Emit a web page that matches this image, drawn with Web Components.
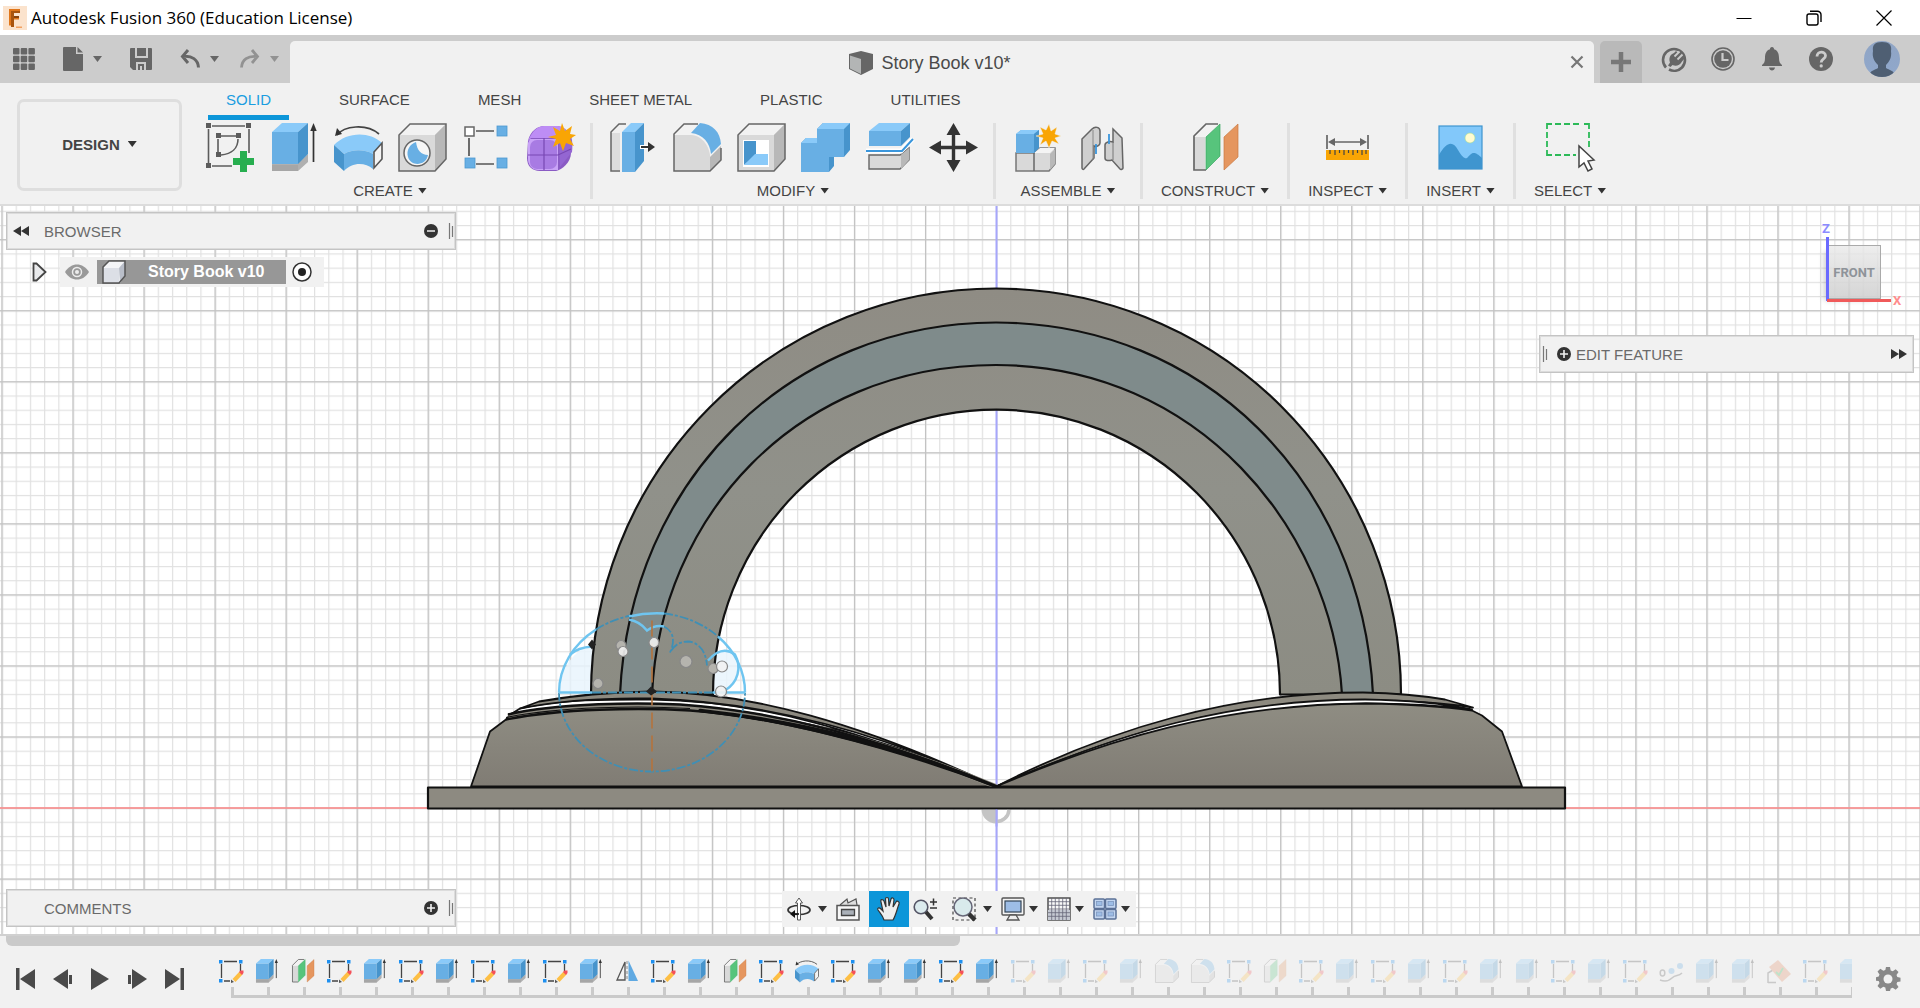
<!DOCTYPE html>
<html lang="en">
<head>
<meta charset="utf-8">
<title>Autodesk Fusion 360 (Education License)</title>
<style>
html,body{margin:0;height:100%}
body{font-family:"Liberation Sans",Arial,sans-serif;font-size:15px;color:#444;background:#f1f1f1;overflow:hidden}
</style>
</head>
<body>
<fx-app></fx-app>
<script>
const ICONS = {
  // application bar
  logo: ['0 0 24 24', '<rect width="24" height="24" fill="#fbe3cd"/><path d="M6 3h11v3.500h-6v3.500h5v3.500h-5v6h-5z" fill="#e0761a"/><path d="M8 5h9v2h-6v14h-3z" fill="#a8540f"/><path d="M11 10h5v2h-5z" fill="#8a430c"/><path d="M13 20.500h6v1.500h-6z" fill="#f0a060"/>'],
  min: ['0 0 16 16', '<path d="M0.500 8.500h15" stroke="#000" fill="none"/>'],
  restore: ['0 0 16 16', '<rect x="1" y="4" width="11" height="11" rx="2" fill="none" stroke="#000" stroke-width="1.400"/><path d="M4 1.200h7.500a3.500 3.500 0 0 1 3.500 3.500v7.300" fill="none" stroke="#000" stroke-width="1.400"/>'],
  close: ['0 0 16 16', '<path d="M0.500 0.500l15 15M15.500 0.500l-15 15" stroke="#000" stroke-width="1.200"/>'],
  apps: ['0 0 22 22', '<g fill="#666"><rect width="6.500" height="6.500" rx="1"/><rect x="7.700" width="6.500" height="6.500" rx="1"/><rect x="15.400" width="6.500" height="6.500" rx="1"/><rect y="7.700" width="6.500" height="6.500" rx="1"/><rect x="7.700" y="7.700" width="6.500" height="6.500" rx="1"/><rect x="15.400" y="7.700" width="6.500" height="6.500" rx="1"/><rect y="15.400" width="6.500" height="6.500" rx="1"/><rect x="7.700" y="15.400" width="6.500" height="6.500" rx="1"/><rect x="15.400" y="15.400" width="6.500" height="6.500" rx="1"/></g>'],
  file: ['0 0 20 24', '<path d="M1 0h12v7h7v16a1 1 0 0 1-1 1H1a1 1 0 0 1-1-1V1a1 1 0 0 1 1-1z" fill="#666"/><path d="M14.500 0l5.500 5.500h-5.500z" fill="#666"/>'],
  save: ['0 0 22 22', '<path d="M1 0h20a1 1 0 0 1 1 1v20a1 1 0 0 1-1 1H3l-3-3V1a1 1 0 0 1 1-1z" fill="#666"/><path d="M5 0h2v8h9V0h2v10H5zM6 22v-8h10v8h-2v-6H8v6z" fill="#ccc"/><path d="M10 18h2v4h-2z" fill="#ccc"/>'],
  undo: ['0 0 20 20', '<path d="M8 1L2.500 7.500L8 14M3 7.500c9-1 15 3 15.500 11" fill="none" stroke="#666" stroke-width="3"/>'],
  redo: ['0 0 20 20', '<path d="M12 1l5.500 6.500L12 14M17 7.500C8 6.500 2 10.500 1.500 18.500" fill="none" stroke="#929292" stroke-width="2.800"/>'],
  doccube: ['0 0 24 24', '<path d="M12 0l12 3v15l-12 6L0 18V3z" fill="#666"/><path d="M1 4.500L12 8v15L1 17.500z" fill="#b3b5b5"/>'],
  x: ['0 0 14 14', '<path d="M1.500 1.500l11 11M12.500 1.500l-11 11" stroke="#777" stroke-width="2.200"/>'],
  plus: ['0 0 20 20', '<path d="M10 0v20M0 10h20" stroke="#777" stroke-width="4.500"/>'],
  ext: ['0 0 24 24', '<path d="M4 20.500A11 11 0 1 1 20 20.500A11 11 0 0 1 7 22.500" fill="none" stroke="#666" stroke-width="2.600"/><path d="M6 18.500l2-3c-1.500-4 0-8 4-9.500l2-2 2 2 3-1.500 1.500 4 2 3-2.500 3c-2.500 4.500-6.500 5-9.500 3.500l-2 2z" fill="#666"/><path d="M12.500 9.500l5-5M15.500 12.500l5-5" stroke="#ccc" stroke-width="1.800"/>'],
  clock: ['0 0 24 24', '<circle cx="12" cy="12" r="11" fill="none" stroke="#666" stroke-width="1.600"/><circle cx="12" cy="12" r="8.800" fill="#666"/><path d="M11.500 6v7h6" fill="none" stroke="#ccc" stroke-width="2.200"/>'],
  bell: ['0 0 24 24', '<path d="M12 0c1.500 0 2 1 2 2.200c4 1.300 5 4.800 5 8.800c0 4 1 5.500 3 7v1H2v-1c2-1.500 3-3 3-7c0-4 1-7.500 5-8.800C10 1 10.500 0 12 0zM9 20.500h6c-.5 4-5.500 4-6 0z" fill="#666"/>'],
  help: ['0 0 24 24', '<circle cx="12" cy="12" r="12" fill="#666"/><path d="M8 9.500c0-6 8.500-5.500 8.500-.8c0 3.300-4.300 3-4.300 6.800" fill="none" stroke="#ccc" stroke-width="2.800"/><rect x="10.600" y="17.300" width="3.200" height="3.200" rx="1.500" fill="#ccc"/>'],
  avatar: ['0 0 36 36', '<defs><linearGradient id="a" x2="0" y2="1"><stop stop-color="#8fa4c4"/><stop offset="1" stop-color="#90a8cc"/></linearGradient><clipPath id="c"><circle cx="18" cy="18" r="18"/></clipPath></defs><circle cx="18" cy="18" r="18" fill="url(#a)"/><g clip-path="url(#c)"><path d="M18 1c7 0 10 3 9 9c1 7-2 11-5 14v3c3 2 8 2 10 9H4c2-7 7-7 10-9v-3c-4-4-6-8-5-14c-1-6 2-9 9-9z" fill="#4f5f73"/></g>'],
  // ribbon tools
  sketch: ['0 0 49 49', '<g stroke="#5c5c5c" stroke-width="1.600" fill="none"><path d="M6 3h33M2.500 6v34M6 43h20M43 6v24"/><path d="M15 13h15M12 16v13M32 16c0 9-6 15-17 16"/></g><g fill="#5c5c5c"><path d="M0 0h5v5H0zM40 0h5v5h-5zM0 40h5v5H0zM10 10h5v5h-5zM30 10h5v5h-5zM10 29h5v5h-5z"/></g><path d="M34 28h7v7h7v7h-7v7h-7v-7h-7v-7h7z" fill="#27ae4f"/>'],
  extrude: ['0 0 49 49', '<path d="M2 40h26l10-9v8l-10 9H2z" fill="#b0b0b0"/><path d="M2 42h26v6H2z" fill="#a6a6a6"/><path d="M2 9h26v32H2z" fill="#68afe4"/><path d="M2 9L12 0h26l-10 9z" fill="#8acaf9"/><path d="M28 9l10-9v31l-10 10z" fill="#4794cc"/><path d="M43.500 5v34" stroke="#333" stroke-width="1.700"/><path d="M43.500 0l3.200 8h-6.400z" fill="#333"/>'],
  revolve: ['0 0 49 49', '<path d="M3 12C10 3 32 0 45 11" fill="none" stroke="#444" stroke-width="1.700"/><path d="M1 13l2-8 5 6z" fill="#333"/><path d="M0 22C13 9 35 8 48 20l-9 11c-8-5-21-5-29 0z" fill="#8acaf9"/><path d="M0 22l10 9v17L0 39z" fill="#4794cc"/><path d="M10 31c8-5 21-5 29 0v15c-8-7-21-7-29 2z" fill="#68afe4"/><path d="M40 29l8-9v16l-8 9z" fill="#f4f4f4" stroke="#555" stroke-width="1.600"/>'],
  hole: ['0 0 49 49', '<path d="M1 12L12 1h36v35L37 48H1z" fill="#d9d9d9"/><path d="M1 12L12 1h36L37 12z" fill="#f2f2f2"/><path d="M37 12L48 1v35L37 48z" fill="#b8b8b8"/><path d="M1 12L12 1h36v35L37 48H1z" fill="none" stroke="#666" stroke-width="1.500"/><ellipse cx="19" cy="30" rx="13" ry="13" fill="#f6f6f6" stroke="#666" stroke-width="1.500"/><path d="M18 19c1 8 5 13 12 13c-2 11-17 12-20 2c-2-7 2-13 8-15z" fill="#68afe4"/>'],
  pattern: ['0 0 49 49', '<path d="M14 8h18M14 41h18M7 15v18" stroke="#555" stroke-width="1.700"/><rect x="3" y="4" width="9" height="9" fill="#fff" stroke="#666" stroke-width="1.500"/><g fill="#68afe4" stroke="#4d98d0" stroke-width=".8"><rect x="35" y="3" width="10" height="10"/><rect x="3" y="35" width="10" height="10"/><rect x="35" y="35" width="10" height="10"/></g>'],
  form: ['0 0 49 49', '<path d="M2 18C4 8 12 3 18 3h14c9 2 13 8 13 15v12c0 9-9 17-15 18H14C6 48 1 43 1 35z" fill="#8a5bc4"/><path d="M2 18C6 8 12 3 18 3h14c4 0 8 3 8 6L32 15H5z" fill="#bd8df5"/><path d="M4 16h28v31H12c-6 0-10-5-10-11V20z" fill="#c9a3f7"/><rect x="4" y="17" width="27" height="29" rx="7" fill="#a87be3"/><path d="M33 16l10-6c3 3 4 10 3 19L34 44z" fill="#9466d2"/><path d="M18 15v32M2 32h30l13-6" stroke="#7848b3" stroke-width="1.200" fill="none"/><path d="M36 0l3 8 7-5-2 8 6 1-6 4 4 7-8-3-3 8-3-8-7 4 3-8-8-2 8-2-3-8 7 4z" fill="#f9a504"/>'],
  presspull: ['0 0 49 49', '<path d="M2 9L10 2h8v44l-7 2H2z" fill="#f0f0f0"/><path d="M2 10h9v37H2z" fill="#ddd"/><path d="M17 1h-7L2 9v39h9" fill="none" stroke="#666" stroke-width="1.500"/><path d="M13 9h13v40H13z" fill="#68afe4"/><path d="M13 9l9-9h13l-9 9z" fill="#8acaf9"/><path d="M26 9l9-9v38L26 49z" fill="#4794cc"/><path d="M31 24h12" stroke="#fff" stroke-width="4"/><path d="M32 24h9" stroke="#333" stroke-width="2"/><path d="M39 19l7 5-7 5z" fill="#333"/>'],
  fillet: ['0 0 49 49', '<path d="M1 11L11 1h13c14 0 24 10 24 24v12L37 48H1z" fill="#f2f2f2"/><path d="M1 12h17c13 1 18 13 19 20v16H1z" fill="#d9d9d9"/><path d="M37 34l11-11v14L37 48z" fill="#b8b8b8"/><path d="M25 1H11L1 11v37h36l11-11V25" fill="none" stroke="#666" stroke-width="1.500"/><path d="M18 10l9-10c13 1 20 9 21 21l-10 10c-1-11-8-20-20-21z" fill="#68afe4"/>'],
  shell: ['0 0 49 49', '<path d="M1 12L12 1h36v35L37 48H1z" fill="#d9d9d9"/><path d="M1 12L12 1h36L37 12z" fill="#f2f2f2"/><path d="M37 12L48 1v35L37 48z" fill="#b8b8b8"/><path d="M1 12L12 1h36v35L37 48H1z" fill="none" stroke="#666" stroke-width="1.500"/><rect x="6" y="17" width="26" height="27" fill="#fff"/><path d="M7 18h12v14L7 42z" fill="#4794cc"/><path d="M7 42l11-11h13v11z" fill="#8acaf9"/>'],
  combine: ['0 0 49 49', '<path d="M0 20l5-5h11V6l6-6h27v27l-6 7H33v9l-5 6H0z" fill="#4794cc"/><path d="M0 20h16V6h27v28H28v15H0z" fill="#68afe4"/><path d="M0 20l5-5h11v5zM16 6l6-6h27l-6 6z" fill="#8acaf9"/>'],
  split: ['0 0 49 49', '<path d="M4 32v14h31l9-9V25l-9 7z" fill="#d9d9d9" stroke="#666" stroke-width="1.400"/><path d="M36 32l8-7v12l-8 9z" fill="#b8b8b8"/><path d="M4 8h32v15H4z" fill="#68afe4"/><path d="M4 8l10-8h31l-9 8z" fill="#8acaf9"/><path d="M36 8l9-8v14l-9 9z" fill="#4794cc"/><path d="M1 28h35l12-12" fill="none" stroke="#fff" stroke-width="5"/><path d="M1 28h36l11-12" fill="none" stroke="#3a96dc" stroke-width="2"/>'],
  move: ['0 0 49 49', '<path d="M24.500 8v33M8 24.500h33" stroke="#333" stroke-width="3.400"/><path d="M24.500 0l7 12h-14zM24.500 49l7-12h-14zM0 24.500l12-7v14zM49 24.500l-12-7v14z" fill="#333"/>'],
  component: ['0 0 49 49', '<g transform="translate(3 0)"><path d="M1 30h18l6-5h15v16l-6 7H1z" fill="#d9d9d9" stroke="#777" stroke-width="1.500"/><path d="M19 30l6-5h15l-5 5z" fill="#f4f4f4"/><path d="M35 31l5-5v15l-5 6z" fill="#b8b8b8"/><path d="M19 30v18" stroke="#666" stroke-width="1.500"/><path d="M1 11l5-4h18v17l-5 6H1z" fill="#68afe4"/><path d="M1 11l5-4h18l-5 4z" fill="#8acaf9"/><path d="M19 11l5-4v18l-5 5z" fill="#4794cc"/></g><path d="M37 1l2 7 6-4-2 7 6 2-6 2 4 6-7-3-3 7-3-7-6 4 3-7-7-2 7-2-3-7 6 3z" fill="#f9a504" stroke="#f1f1f1" stroke-width=".5"/>'],
  joint: ['0 0 49 49', '<path d="M6 16l10-10c3-3 8-2 8 2v12c0 3-4 4-6 3v12L8 46c-1 1-2 0-2-1z" fill="#cfcfcf" stroke="#666" stroke-width="1.500"/><path d="M17 7v30" stroke="#888" stroke-width="1"/><path d="M46 15L37 6v13c-3-1-8 0-8 3v13c0 3 4 3 7 2l8 9c1 1 3 0 3-1z" fill="#cfcfcf" stroke="#666" stroke-width="1.500"/><path d="M37 19v18" stroke="#777"/><path d="M20 21v10M33 11v10" stroke="#3a96dc" stroke-width="1.800"/>'],
  plane: ['0 0 49 49', '<path d="M3 13L15 2h12v34L14 48H3z" fill="#f2f2f2"/><path d="M3 14h11v33H3z" fill="#d9d9d9"/><path d="M27 1H15L3 13v34h12" fill="none" stroke="#666" stroke-width="1.700"/><path d="M15 14L29 1v32L15 47z" fill="#57c47c" stroke="#3aa861" stroke-width=".7"/><path d="M33 14L47 1v33L33 47z" fill="#e5965f" stroke="#c87a43" stroke-width=".7"/>'],
  measure: ['0 0 49 49', '<path d="M4 12v14M45 12v14M9 19h31" stroke="#666" stroke-width="1.700"/><path d="M5 19l7-4v8zM44 19l-7-4v8z" fill="#666"/><rect x="3" y="27" width="43" height="10" fill="#f9a504"/><path d="M7 27v4M12 27v5M16.500 27v3M21 27v5M25.500 27v3M30 27v5M34.500 27v3M39 27v5M43 27v4" stroke="#444" stroke-width="1.200"/>'],
  image: ['0 0 49 49', '<rect x="3" y="3" width="43" height="43" fill="#82c8fa"/><path d="M3 32c8-14 14-14 19-5c4 7 7 9 9 8c4-4 6-9 15 0v11H3z" fill="#3f95cf"/><circle cx="34" cy="15" r="5" fill="#fffbd0" stroke="#a8dc90" stroke-width=".6"/><rect x="3" y="3" width="43" height="43" fill="none" stroke="#3f95cf" stroke-width="1.200"/>'],
  select: ['0 0 49 49', '<path d="M1 6V1h5M9 1h6M18 1h6M27 1h6M38 1h5v5M43 9v6M43 18v6M1 9v6M1 18v6M1 27v5h5M9 32h6M18 32h6M27 32h3" fill="none" stroke="#2cba58" stroke-width="1.800"/><path d="M33 23v21l5-4 4 8 4-2-4-8 6-1z" fill="#fff" stroke="#444" stroke-width="1.500"/>'],
  // browser tree
  rew: ['0 0 16 10', '<path d="M8 0v10L0 5zM16 0v10L8 5z" fill="#333"/>'],
  ffw: ['0 0 16 10', '<path d="M0 0v10l8-5zM8 0v10l8-5z" fill="#333"/>'],
  minus: ['0 0 14 14', '<circle cx="7" cy="7" r="7" fill="#333"/><path d="M3 7h8" stroke="#f1f1f1" stroke-width="1.500"/>'],
  add: ['0 0 14 14', '<circle cx="7" cy="7" r="7" fill="#333"/><path d="M3 7h8M7 3v8" stroke="#f1f1f1" stroke-width="1.600"/>'],
  grip: ['0 0 6 18', '<path d="M1.500 1v16M4.500 4v11" stroke="#777" stroke-width="1.200"/>'],
  tri: ['0 0 16 20', '<path d="M1.500 1.500h3L13.500 10l-9 8.500h-3z" fill="#e9eaec" stroke="#444" stroke-width="1.800"/>'],
  eye: ['0 0 24 16', '<path d="M0 8C6-2 18-2 24 8C18 18 6 18 0 8z" fill="#999"/><circle cx="12" cy="8" r="4.500" fill="none" stroke="#ececec" stroke-width="1.500"/><circle cx="12" cy="8" r="2" fill="#ececec"/>'],
  body: ['0 0 24 24', '<path d="M1 8l6-7h16v15l-5 7H1z" fill="#f4f5f7"/><path d="M1 8h16v15H1z" fill="#dcdfe6"/><path d="M17 8l6-7v15l-5 7z" fill="#b9bec9"/><path d="M1 7l6-6h16v15l-6 7H1z" fill="none" stroke="#555" stroke-width="1.500"/>'],
  radio: ['0 0 20 20', '<circle cx="10" cy="10" r="9" fill="#fff" stroke="#333" stroke-width="1.500"/><circle cx="10" cy="10" r="4" fill="#222"/>'],
  // navigation bar
  orbit: ['0 0 24 24', '<ellipse cx="12" cy="13" rx="11" ry="4.500" fill="none" stroke="#333" stroke-width="1.700"/><path d="M10.500 6H8.500L12 1l3.500 5h-2v17h-3z" fill="#fff" stroke="#555" stroke-width="1"/><path d="M3 17l5-4v8z" fill="#111"/><path d="M6 17h6" stroke="#111" stroke-width="1.600"/>'],
  look: ['0 0 24 24', '<path d="M4 8l7-6 1 4 8-4 1 6" fill="#ddd" stroke="#555" stroke-width="1.200"/><path d="M1 8.500h22V23H1z" fill="#f7f7f7" stroke="#555" stroke-width="1.500"/><path d="M5.500 12.500h13v6h-13z" fill="#aab0b8" stroke="#444" stroke-width="1.300"/>'],
  hand: ['0 0 24 24', '<path d="M7 23c-1-4-4-7-6-10c-1-2 1-3 3-1l2 2L4 5c-1-3 2-3 3-1l2 6L8.500 2c0-2 3-2 3 0L12 9l2-7c1-2 3-1 3 1l-1 7 3-5c1-2 4 0 3 2c-2 5-3 11-6 16z" fill="#eee" stroke="#333" stroke-width="1.200"/>'],
  zoom: ['0 0 24 24', '<circle cx="8" cy="10" r="6.800" fill="#dcebee" stroke="#556" stroke-width="1.600"/><path d="M13 15l6 7" stroke="#333" stroke-width="4"/><path d="M17 5h7M20.500 1.500v7M17 11h7" stroke="#333" stroke-width="1.500"/>'],
  fit: ['0 0 24 24', '<rect x="1" y="1" width="22" height="22" fill="none" stroke="#444" stroke-width="1.200" stroke-dasharray="3 2.500"/><circle cx="11" cy="10" r="9" fill="#d9eaec" stroke="#667" stroke-width="1.500"/><path d="M17 17l6 6" stroke="#333" stroke-width="4.500"/>'],
  display: ['0 0 24 24', '<rect x="1" y="1" width="22" height="17" rx="1" fill="#f4f4f4" stroke="#555" stroke-width="1.400"/><rect x="4" y="4" width="16" height="11" fill="#9dbde6" stroke="#345" stroke-width="1.200"/><path d="M9 18h6l3 5H6z" fill="#eee" stroke="#555" stroke-width="1.300"/>'],
  grid: ['0 0 24 24', '<rect x="1" y="1" width="22" height="22" fill="#f8f8f8" stroke="#444" stroke-width="1.400"/><path d="M1 13h22v10H1z" fill="#c5c9d2"/><path d="M4.700 1v22M8.300 1v22M12 1v22M15.700 1v22M19.300 1v22M1 4.700h22M1 8.300h22M1 12h22M1 15.700h22M1 19.300h22" stroke="#667" stroke-width=".8"/>'],
  views: ['0 0 24 22', '<g fill="#c3d6f0" stroke="#5b7196" stroke-width="1.500"><rect x="1" y="1" width="10.500" height="9.500" rx="1"/><rect x="12.500" y="1" width="10.500" height="9.500" rx="1"/><rect x="1" y="11.500" width="10.500" height="9.500" rx="1"/><rect x="12.500" y="11.500" width="10.500" height="9.500" rx="1"/></g><g fill="#9dbde6" stroke="#7d97bf" stroke-width=".8"><rect x="3.500" y="3.500" width="5.500" height="4"/><rect x="15" y="3.500" width="5.500" height="4"/><rect x="3.500" y="14" width="5.500" height="4"/><rect x="15" y="14" width="5.500" height="4"/></g>'],
  // timeline
  first: ['0 0 20 22', '<path d="M0 0h3.500v22H0zM19 1v20L4 11z" fill="#4a4a4a"/>'],
  prev: ['0 0 20 22', '<path d="M15 1v20L0 11z" fill="#4a4a4a"/><path d="M16 7h3v9h-3z" fill="#4a4a4a"/>'],
  play: ['0 0 20 22', '<path d="M1 0v22l18-11z" fill="#4a4a4a"/>'],
  next: ['0 0 20 22', '<path d="M5 1v20l15-10z" fill="#4a4a4a"/><path d="M1 7h3v9H1z" fill="#4a4a4a"/>'],
  last: ['0 0 20 22', '<path d="M16.500 0H20v22h-3.500zM1 1v20l15-10z" fill="#4a4a4a"/>'],
  tsketch: ['0 0 24 24', '<path d="M5 2.500h13M2.500 5v14M5 22h6M21.500 5v7" stroke="#444" stroke-width="1.300"/><path d="M0 1h3.500v3.500H0zM20 1h3.500v3.500H20zM0 20h3.500v3.500H0z" fill="#1e90f0"/><path d="M13.500 20l7-7.500 3 3-7 7.500z" fill="#fdbf45"/><path d="M20 13l1.500-1.500h3V14L23 16z" fill="#f4505a"/><path d="M12 20.500l3 2.500-3 1z" fill="#555"/>'],
  mirror: ['0 0 24 24', '<path d="M10 3v18H2z" fill="#f4f4f4" stroke="#555" stroke-width="1.300"/><path d="M13.500 1.500L23 22h-9.500z" fill="#5fa9e2"/><path d="M12 2v3M12 7v3M12 12v3M12 17v3" stroke="#777" stroke-width=".8"/>'],
  path: ['0 0 24 24', '<path d="M1 21c6 2 9 1 12-2c4-4 6-1 10-5" fill="none" stroke="#555" stroke-width="1.500"/><ellipse cx="3.500" cy="14" rx="2.300" ry="3" fill="none" stroke="#555" stroke-width="1.500"/><circle cx="12.500" cy="12" r="3" fill="#5fa9e2"/><circle cx="21" cy="7" r="3" fill="#5fa9e2"/>'],
  canvas: ['0 0 24 24', '<path d="M1 24V14l5-3M1 23.500h8" fill="none" stroke="#555" stroke-width="1.500"/><path d="M11 1l13 14-9 8L2 8z" fill="#e5865a"/><path d="M9 13l3 3 4-7" stroke="#2cba58" stroke-width="1.800" fill="none"/>'],
  gear: ['0 0 24 24', '<path d="M10 0h4l.7 3.500 2 .8 3-2 2.800 2.800-2 3 .8 2 3.200.7v3.600l-3.200.6-.8 2 2 3-2.800 2.800-3-2-2 .8L14 24h-4l-.7-3.400-2-.8-3 2-2.800-2.800 2-3-.8-2L0 13.800v-3.600l2.700-.6.8-2-2-3 2.800-2.800 3 2 2-.8z" fill="#888"/><circle cx="12" cy="12" r="4.500" fill="#f1f1f1"/>']
};

const BASE = `*{box-sizing:border-box}button{font:inherit;color:inherit;background:none;border:0;padding:0;margin:0;display:flex;align-items:center}`;
class Part extends HTMLElement {
  constructor() { super(); this.attachShadow({ mode: 'open' }); }
  connectedCallback() { this.shadowRoot.innerHTML = `<style>${BASE}${this.css()}</style>${this.html()}`; }
  css() { return ''; }
  html() { return '<slot></slot>'; }
}

customElements.define('fx-icon', class extends Part {
  css() { return ':host{display:block;flex:none;width:24px;height:24px}svg{display:block;width:100%;height:100%;overflow:visible}'; }
  html() { const [box, art] = ICONS[this.getAttribute('name')]; return `<svg viewBox="${box}" aria-hidden="true">${art}</svg>`; }
});

customElements.define('fx-caret', class extends Part {
  css() { return ':host{display:block;flex:none;width:9px;height:6px;background:var(--caret,#333);clip-path:polygon(0 0,100% 0,50% 100%)}'; }
  html() { return ''; }
});

customElements.define('fx-titlebar', class extends Part {
  css() { return `:host{display:flex;height:35px;flex:none;background:#fff;color:#000;align-items:center;padding:0 28px 0 3px;font-family:"Open Sans","Noto Sans",sans-serif;font-size:17px;gap:4px}
    .sp{flex:1}.win{display:flex;gap:54px}.win fx-icon{width:16px;height:16px}`; }
  html() { return `<fx-icon name="logo"></fx-icon><span><slot></slot></span><span class="sp"></span>
    <div class="win"><button aria-label="Minimize"><fx-icon name="min"></fx-icon></button><button aria-label="Restore"><fx-icon name="restore"></fx-icon></button><button aria-label="Close"><fx-icon name="close"></fx-icon></button></div>`; }
});

customElements.define('fx-appbar', class extends Part {
  css() { return `:host{display:flex;height:48px;flex:none;background:#ccc;align-items:flex-end}
    .left{width:290px;height:48px;display:flex;align-items:center;padding-left:13px;gap:28px;--caret:#666}
    .left fx-icon{width:22px;height:22px}.left .f{width:20px;height:24px}.pair{gap:10px}.u fx-icon{width:20px}.off{--caret:#929292;margin-left:-7px}
    .tab{flex:1;height:42px;background:#f1f1f1;border-radius:5px 5px 0 0;display:flex;align-items:center;padding-right:10px}
    .doc{flex:1;height:42px;justify-content:center;gap:8px;font-size:18px;color:#4a4a4a;padding-top:2px}
    .x fx-icon{width:14px;height:14px}
    .new{width:42px;height:42px;margin-left:6px;background:#b9b9b9;border-radius:5px 5px 0 0;justify-content:center}.new fx-icon{width:20px;height:20px}
    .right{height:48px;display:flex;align-items:center;gap:25px;padding:0 20px}.right .av{width:36px;height:36px}.last{margin-left:6px}`; }
  html() { return `<div class="left"><button aria-label="Data panel"><fx-icon name="apps"></fx-icon></button>
    <button class="pair" aria-label="File"><fx-icon class="f" name="file"></fx-icon><fx-caret></fx-caret></button>
    <button aria-label="Save"><fx-icon name="save"></fx-icon></button>
    <button class="pair u" aria-label="Undo"><fx-icon name="undo"></fx-icon><fx-caret></fx-caret></button>
    <button class="pair u off" aria-label="Redo"><fx-icon name="redo"></fx-icon><fx-caret></fx-caret></button></div>
    <div class="tab"><button class="doc"><fx-icon name="doccube"></fx-icon><slot></slot></button><button class="x" aria-label="Close document"><fx-icon name="x"></fx-icon></button></div>
    <button class="new" aria-label="New design"><fx-icon name="plus"></fx-icon></button>
    <div class="right"><button aria-label="Extensions"><fx-icon name="ext"></fx-icon></button><button aria-label="Job status"><fx-icon name="clock"></fx-icon></button><button aria-label="Notifications"><fx-icon name="bell"></fx-icon></button><button aria-label="Help"><fx-icon name="help"></fx-icon></button><button class="last" aria-label="Account"><fx-icon class="av" name="avatar"></fx-icon></button></div>`; }
});

customElements.define('fx-group', class extends Part {
  css() { return `:host{display:flex;flex-direction:column;align-items:center;justify-content:space-between;height:76px;padding:0 18px;border-right:3px solid #e0e0e0}
    :host(:last-child){border:0}
    .tools{display:flex;margin:0 -10px}.tools button{width:64px;justify-content:center}.tools fx-icon{width:49px;height:49px}
    .name{gap:5px;line-height:17px;white-space:nowrap}`; }
  html() { return `<div class="tools">${this.getAttribute('tools').split(' ').map(t => `<button aria-label="${t}"><fx-icon name="${t}"></fx-icon></button>`).join('')}</div><button class="name"><slot></slot><fx-caret></fx-caret></button>`; }
});

customElements.define('fx-ribbon', class extends Part {
  css() { return `:host{display:flex;height:123px;flex:none;background:#f1f1f1;border-bottom:2px solid #dcdcdc;padding-left:17px;gap:8px}
    .ws{width:165px;height:92px;margin-top:16px;padding-bottom:2px;border:3px solid #dedede;border-radius:7px;justify-content:center;gap:8px;font-weight:bold;flex:none}
    .main{display:flex;flex-direction:column;gap:3px}
    .tabs{display:flex;gap:32px;padding-left:18px}.tabs button{height:37px;padding:0 18px;border-bottom:5px solid transparent;white-space:nowrap}
    .tabs .on{color:#1a9de0;border-color:#0d96d9}
    .groups{display:flex}`; }
  html() { return `<button class="ws">DESIGN <fx-caret></fx-caret></button><div class="main">
    <nav class="tabs"><button class="on">SOLID</button><button>SURFACE</button><button>MESH</button><button>SHEET METAL</button><button>PLASTIC</button><button>UTILITIES</button></nav>
    <div class="groups"><fx-group tools="sketch extrude revolve hole pattern form">CREATE</fx-group><fx-group tools="presspull fillet shell combine split move">MODIFY</fx-group><fx-group tools="component joint">ASSEMBLE</fx-group><fx-group tools="plane">CONSTRUCT</fx-group><fx-group tools="measure">INSPECT</fx-group><fx-group tools="image">INSERT</fx-group><fx-group tools="select">SELECT</fx-group></div></div>`; }
});

customElements.define('fx-panel', class extends Part {
  css() { return `:host{display:flex;align-items:center;height:38px;background:#f1f1f1;border:1px solid #c4c4c4;color:#6a6a6a;box-shadow:inset 0 0 0 1px #dcdcdc}
    .t{flex:1;white-space:nowrap}.rw{width:16px;height:10px}.sm{width:14px;height:14px}.gr{width:6px;height:18px}
    .lead{width:37px;padding-left:6px}.end{display:flex;align-items:center;gap:10px;padding-right:1px}
    :host([side=right]) .lead{width:auto;display:flex;align-items:center;gap:9px;padding:0 5px 0 2px}:host([side=right]) .end{padding-right:6px}`; }
  html() {
    if (this.getAttribute('side') === 'right') return `<span class="lead"><fx-icon class="gr" name="grip"></fx-icon><button aria-label="Expand"><fx-icon class="sm" name="add"></fx-icon></button></span><span class="t"><slot></slot></span><span class="end"><button aria-label="Dock"><fx-icon class="rw" name="ffw"></fx-icon></button></span>`;
    const open = this.hasAttribute('open');
    return `<span class="lead">${open ? '<button aria-label="Collapse"><fx-icon class="rw" name="rew"></fx-icon></button>' : ''}</span><span class="t"><slot></slot></span><span class="end"><button aria-label="Toggle"><fx-icon class="sm" name="${open ? 'minus' : 'add'}"></fx-icon></button><fx-icon class="gr" name="grip"></fx-icon></span>`;
  }
});

customElements.define('fx-tree', class extends Part {
  css() { return `:host{display:flex;align-items:center;gap:12px}
    .tri{width:16px;height:20px}.row{display:flex;align-items:center;height:30px;width:264px;background:#f1f1f1;padding-left:5px}
    .eye{width:24px;height:16px}.name{flex:none;width:189px;height:24px;margin:0 6px 0 8px;padding-left:5px;gap:22px;background:#979797;color:#fff;font-weight:bold;font-size:16px}
    .rad{width:20px;height:20px}`; }
  html() { return `<button aria-label="Expand"><fx-icon class="tri" name="tri"></fx-icon></button><div class="row"><button aria-label="Visibility"><fx-icon class="eye" name="eye"></fx-icon></button><button class="name"><fx-icon name="body"></fx-icon><slot></slot></button><button aria-label="Activate"><fx-icon class="rad" name="radio"></fx-icon></button></div>`; }
});

customElements.define('fx-navbar', class extends Part {
  css() { return `:host{display:flex;height:36px;background:#f1f1f1;padding:0 6px 0 5px;gap:9px}
    .w{gap:7px}.n{gap:4px}.hand{background:#0d96d9;width:40px;justify-content:center;margin-right:-5px}.f{margin-left:6px}`; }
  html() { return `<button class="w" aria-label="Orbit"><fx-icon name="orbit"></fx-icon><fx-caret></fx-caret></button><button aria-label="Look at"><fx-icon name="look"></fx-icon></button><button class="hand" aria-label="Pan"><fx-icon name="hand"></fx-icon></button><button aria-label="Zoom"><fx-icon name="zoom"></fx-icon></button><button class="f w" aria-label="Fit"><fx-icon name="fit"></fx-icon><fx-caret></fx-caret></button><button class="n" aria-label="Display settings"><fx-icon name="display"></fx-icon><fx-caret></fx-caret></button><button class="n" aria-label="Grid and snaps"><fx-icon name="grid"></fx-icon><fx-caret></fx-caret></button><button class="n" aria-label="Viewports"><fx-icon name="views"></fx-icon><fx-caret></fx-caret></button>`; }
});

customElements.define('fx-viewcube', class extends Part {
  css() { return `:host{display:block;width:84px;height:80px;position:relative;font:bold 13px Roboto,"Liberation Sans",sans-serif}
    .face{position:absolute;left:10px;top:22px;width:54px;height:54px;justify-content:center;background:linear-gradient(#e9e9e9cc,#cfcfcfdd);border:1px solid #aaa;color:#8e9399;box-shadow:-6px 4px 6px -3px #0003}
    .z{position:absolute;left:9px;top:14px;width:3px;height:64px;background:#6a6aff}.x{position:absolute;left:10px;top:76px;width:64px;height:3px;background:#f05a5a}
    .lz{position:absolute;left:5px;top:-2px;color:#8c8cff}.lx{position:absolute;left:76px;top:70px;color:#ff8c8c}`; }
  html() { return `<button class="face">FRONT</button><i class="z"></i><i class="x"></i><span class="lz">Z</span><span class="lx">X</span>`; }
});

customElements.define('fx-scene', class extends Part {
  css() { return ':host{display:block;background:#fff}svg{display:block;width:100%;height:100%}'; }
  html() { return `<svg viewBox="0 205 1920 729" preserveAspectRatio="xMidYMid slice" role="img" aria-label="Model front view">
    <defs>
      <pattern id="minor" width="14.208" height="14.208" patternUnits="userSpaceOnUse" x="996" y="807"><path d="M0 .5h14.208M.5 0v14.208" stroke="#e1e1e1" stroke-width="1.400"/></pattern>
      <pattern id="major" width="71.040" height="71.040" patternUnits="userSpaceOnUse" x="996" y="807"><path d="M0 .5h71.040M.5 0v71.040" stroke="#c2c2c2" stroke-width="1.500"/></pattern>
      <linearGradient id="pg" x2="0" y2="1"><stop stop-color="#8f8d83"/><stop offset="1" stop-color="#807c74"/></linearGradient>
      <linearGradient id="ar" x2="0" y2="1"><stop stop-color="#8f8c84"/><stop offset=".5" stop-color="#90918a"/><stop offset="1" stop-color="#8c8c83"/></linearGradient>
      <clipPath id="out"><path d="M540 600H592V693H540zM713 600H760V693H713z"/></clipPath>
    </defs>
    <rect y="205" width="1920" height="730" fill="#fff"/><rect y="205" width="1920" height="730" fill="url(#minor)"/><rect y="205" width="1920" height="730" fill="url(#major)"/>
    <path d="M0 807.500H1920" stroke="#f88" stroke-width="1.500"/><path d="M996.500 205V935" stroke="#a6a6fb" stroke-width="2"/>
    <path d="M559 692Q562 655 592 644V692zM713 660Q722 644 735 654C742 667 738 682 725 692H713z" fill="#e9f5fd" fill-opacity=".85" clip-path="url(#out)"/>
    <g stroke="#111" stroke-width="2.200" stroke-linejoin="round">
      <path d="M591 694A405 406 0 0 1 1401 694H1280A283.500 285 0 0 0 713 694z" fill="url(#ar)"/>
      <path d="M620 694C630 479 790 322 996 322S1362 479 1373 694H1342C1332 529 1198 364.500 996 364.500S660 519 652 694z" fill="#7f8b8b"/>
    </g>
    <g stroke="#111" stroke-width="1.800" stroke-linejoin="round">
      <path d="M471 786L490 731L506 719L512 713C600 701 690 706 760 719S930 758 996 786z" fill="url(#pg)"/>
      <path d="M520 708C560 698 610 699 652 699C760 700 860 730 996 786C900 742 820 723 745 713C660 702 560 705 512 713z" fill="#fff"/>
      <path d="M520 708L539 701Q590 692 652 691C750 692 860 722 996 786C880 732 770 702 652 698C600 697 560 700 520 708z" fill="#8d8a80"/>
      <path d="M508 716C560 704 640 704 680 706C770 712 870 735 996 786" fill="none" stroke="#8d8a80" stroke-width="5"/>
      <path d="M508 714C560 702 640 702 680 704C780 711 880 738 996 786M506 719C560 708 640 707 690 710C770 716 880 742 996 786" fill="none" stroke-width="2.400"/>
      <path d="M506 717C560 706 640 705 690 708" fill="none" stroke-width="1.200"/>
      <path d="M700 710C800 721 890 742 996 786" fill="none" stroke-width="3.500" stroke-linecap="round"/>
      <path d="M996 786C1110 728 1230 692 1363 692Q1410 693 1445 699L1473 707C1440 702 1400 700 1365 700C1230 700 1120 732 996 786z" fill="#8d8a80"/>
      <path d="M996 786C1120 732 1230 699 1365 699Q1430 700 1472 709C1440 705 1400 703 1366 703C1220 706 1110 742 996 786z" fill="#fff"/>
      <path d="M996 786C1110 738 1220 704 1366 703Q1430 704 1472 710L1482 715L1502 731L1522 786z" fill="url(#pg)"/>
      <path d="M428 787H1565V808H428z" fill="#8d8a81" stroke-width="2.200"/>
    </g>
    <path d="M996 809.500V823A14.500 14.500 0 0 1 981.500 809.500z" fill="#c4c4c4"/><path d="M996 821A12.500 12.500 0 0 0 1009 809.500" fill="none" stroke="#c4c4c4" stroke-width="3.500"/><path d="M996.500 809V826" stroke="#a6a6fb" stroke-width="2"/>
    <g fill="none" stroke="#3f8fb5" stroke-width="1.800" stroke-dasharray="9 2 3 2">
      <path d="M596 629A93 79 0 0 1 631 615M664 613A93 79 0 0 1 718 636M592 692H713M559 692A93 79 0 0 0 745 692"/>
      <path d="M664 626Q676 632 672 647L670 652Q676 641 688 641C700 642 706 652 707 665"/>
    </g>
    <g fill="none" stroke="#6fc5f0" stroke-width="2.400">
      <path d="M559 692A93 79 0 0 1 596 629M629 616Q646 612 664 613M718 636A93 79 0 0 1 745 692M559 692H592M713 692H745"/>
      <path d="M570 654Q578 647 592 646M629 619Q640 621 647 630Q655 624 664 626M708 660Q722 644 735 654C742 667 738 682 725 690"/>
    </g>
    <path d="M652 620V771" stroke="#b5733d" stroke-width="1.600" stroke-dasharray="16 7"/>
    <g stroke="#888" stroke-width="1.200"><g fill="#b5b4ae"><circle cx="598" cy="683" r="5"/><circle cx="621" cy="645" r="5"/><circle cx="686" cy="661" r="6"/><circle cx="713" cy="668" r="5"/></g><g fill="#f2f2f2" fill-opacity=".9"><circle cx="623" cy="651" r="5"/><circle cx="654" cy="642" r="5"/><circle cx="722" cy="666" r="5.500"/><circle cx="721" cy="691" r="5.500"/></g></g>
    <path d="M588 644l4-5 4 5-4 5zM646 691l5-5 6 5-6 4z" fill="#222"/>
  </svg>`; }
});

customElements.define('fx-viewport', class extends Part {
  css() { return `:host{display:block;position:relative;flex:1;min-height:0;overflow:hidden}
    fx-scene{width:100%;height:100%}.o{position:absolute}
    .b{left:6px;top:6px;width:450px}.t{left:32px;top:51px}.c{left:6px;bottom:7px;width:450px}.e{right:6px;top:129px;width:375px}.v{right:19px;top:17px}.n{left:50%;margin-left:-178px;bottom:7px}`; }
  html() { return `<fx-scene></fx-scene><fx-panel class="o b" open>BROWSER</fx-panel><fx-tree class="o t">Story Book v10</fx-tree><fx-panel class="o c">COMMENTS</fx-panel><fx-panel class="o e" side="right">EDIT FEATURE</fx-panel><fx-viewcube class="o v"></fx-viewcube><fx-navbar class="o n"></fx-navbar>`; }
});

customElements.define('fx-timeline', class extends Part {
  css() { return `:host{display:flex;flex-direction:column;height:74px;flex:none;border-top:2px solid #d0d0d0}
    .bar{height:10px;flex:none;padding:0 6px}.thumb{width:50%;height:10px;background:#cacaca;border-radius:0 0 6px 6px}
    .row{display:flex;padding:0 20px 0 16px}.play{display:flex;gap:17px;padding-top:22px;width:203px;flex:none}.play fx-icon{width:20px;height:22px}.play button{height:22px}
    .track{flex:1;min-width:0;display:flex;overflow:hidden;margin-right:24px;padding-top:13px;height:52px}
    .s{flex:none;width:36px;height:39px;flex-direction:column;align-items:flex-start;gap:4px;border-bottom:3px solid #cacaca}
    .s::after{content:"";width:3px;height:8px;background:#cacaca;margin-left:12px}
    .s:first-child{border-bottom:0;background:linear-gradient(#cacaca,#cacaca) 12px 100%/24px 3px no-repeat}.s:first-child::after{height:11px}
    .off fx-icon{opacity:.25}
    .s:last-child{width:15px;overflow:hidden}
    .gear{padding-top:21px;height:45px}`; }
  html() {
    const K = { s: 'tsketch', e: 'extrude', p: 'plane', m: 'mirror', r: 'revolve', f: 'fillet', c: 'path', d: 'canvas' };
    const done = 'sepsesesesemsepsrseese', pending = 'seseffspseseseesesceedse';
    return `<div class="bar"><div class="thumb"></div></div><div class="row"><div class="play">${['first', 'prev', 'play', 'next', 'last'].map(n => `<button aria-label="${n}"><fx-icon name="${n}"></fx-icon></button>`).join('')}</div>
    <div class="track">${[...done + pending].map((c, i) => `<button class="s${i >= done.length ? ' off' : ''}" aria-label="${K[c]}"><fx-icon name="${K[c]}"></fx-icon></button>`).join('')}</div><button class="gear" aria-label="Settings"><fx-icon name="gear"></fx-icon></button></div>`;
  }
});

customElements.define('fx-app', class extends Part {
  css() { return ':host{display:flex;flex-direction:column;height:100vh}'; }
  html() { return `<fx-titlebar>Autodesk Fusion 360 (Education License)</fx-titlebar><fx-appbar>Story Book v10*</fx-appbar><fx-ribbon></fx-ribbon><fx-viewport></fx-viewport><fx-timeline></fx-timeline>`; }
});
</script>
</body>
</html>
